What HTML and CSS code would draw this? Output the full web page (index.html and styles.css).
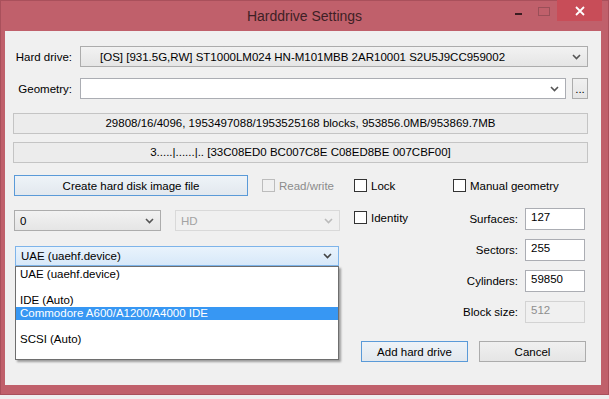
FILE: index.html
```html
<!DOCTYPE html>
<html lang="en">
<head>
    <meta charset="UTF-8">
    <title>Harddrive Settings</title>
    <link rel="stylesheet" href="styles.css">
</head>
<body>
    <div class="window">
        <div class="titlebar">
            <div></div>
            <div class="title">Harddrive Settings</div>
            <div class="controls">
                <span class="ctl ctl-min"><i></i></span>
                <span class="ctl ctl-max"><i></i></span>
                <span class="ctl ctl-close">
                    <svg width="10" height="10" viewBox="0 0 10 10"><path d="M1 1L9 9M9 1L1 9" stroke="#fff" stroke-width="1.8"/></svg>
                </span>
            </div>
        </div>

        <div class="client">
            <!-- drive row -->
            <div class="row">
                <label class="lbl">Hard drive:</label>
                <div class="combo combo-drive">
                    <span class="combo-text">[OS] [931.5G,RW] ST1000LM024 HN-M101MBB 2AR10001 S2U5J9CC959002</span>
                    <svg class="chev" width="9" height="6" viewBox="0 0 9 6"><path d="M1 1L4.5 4.5L8 1" fill="none" stroke="#555" stroke-width="1.6"/></svg>
                </div>
            </div>

            <div class="row row-geo">
                <label class="lbl">Geometry:</label>
                <div class="combo combo-edit">
                    <span class="combo-text"></span>
                    <svg class="chev" width="9" height="6" viewBox="0 0 9 6"><path d="M1 1L4.5 4.5L8 1" fill="none" stroke="#555" stroke-width="1.6"/></svg>
                </div>
                <button class="btn btn-dots">...</button>
            </div>

            <div class="infobox info-1">29808/16/4096, 1953497088/1953525168 blocks, 953856.0MB/953869.7MB</div>
            <div class="infobox info-2">3.....|......|.. [33C08ED0 BC007C8E C08ED8BE 007CBF00]</div>

            <div class="lower">
                <div class="left-col">
                    <div class="lrow">
                        <button class="btn btn-default btn-create">Create hard disk image file</button>
                        <span class="check disabled"><span class="box"></span>Read/write</span>
                    </div>
                    <div class="lrow lrow-sel">
                        <div class="combo combo-unit">
                            <span class="combo-text">0</span>
                            <svg class="chev" width="9" height="6" viewBox="0 0 9 6"><path d="M1 1L4.5 4.5L8 1" fill="none" stroke="#555" stroke-width="1.6"/></svg>
                        </div>
                        <div class="combo combo-hd disabled">
                            <span class="combo-text">HD</span>
                            <svg class="chev" width="9" height="6" viewBox="0 0 9 6"><path d="M1 1L4.5 4.5L8 1" fill="none" stroke="#bbb" stroke-width="1.6"/></svg>
                        </div>
                    </div>
                    <div class="lrow lrow-ctrl">
                        <div class="combo combo-open">
                            <span class="combo-text">UAE (uaehf.device)</span>
                            <svg class="chev" width="9" height="6" viewBox="0 0 9 6"><path d="M1 1L4.5 4.5L8 1" fill="none" stroke="#444" stroke-width="1.6"/></svg>
                            <ul class="droplist">
                                <li>UAE (uaehf.device)</li>
                                <li></li>
                                <li>IDE (Auto)</li>
                                <li class="sel">Commodore A600/A1200/A4000 IDE</li>
                                <li></li>
                                <li>SCSI (Auto)</li>
                                <li></li>
                            </ul>
                        </div>
                    </div>
                </div>

                <div class="right-col">
                    <div class="rrow">
                        <span class="check check-lock"><span class="box"></span>Lock</span>
                        <span class="check"><span class="box"></span>Manual geometry</span>
                    </div>
                    <div class="rgeo">
                        <div class="rgeo-left">
                            <span class="check"><span class="box"></span>Identity</span>
                        </div>
                        <div class="fields">
                            <label class="flbl">Surfaces:</label><div class="field">127</div>
                            <label class="flbl">Sectors:</label><div class="field">255</div>
                            <label class="flbl">Cylinders:</label><div class="field">59850</div>
                            <label class="flbl">Block size:</label><div class="field disabled">512</div>
                        </div>
                    </div>
                    <div class="buttons">
                        <button class="btn btn-default">Add hard drive</button>
                        <button class="btn">Cancel</button>
                    </div>
                </div>
            </div>
        </div>
    </div>
</body>
</html>
```

FILE: styles.css
```css
body {
    margin: 0;
    background-color: #efefef;
    font-family: 'Liberation Sans', Arial, sans-serif;
    font-size: 11.5px;
    color: #000;
}

.window {
    width: 609px;
    height: 395px;
    display: flex;
    flex-direction: column;
    background-color: #c0606b;
    box-shadow: inset 0 0 0 1px #a9505b;
}

/* title bar */
.titlebar {
    height: 31px;
    display: grid;
    grid-template-columns: 1fr auto 1fr;
}

.title {
    font-size: 14px;
    color: #3e1f25;
    line-height: 33px;
}

.controls {
    justify-self: end;
    display: flex;
    align-items: flex-start;
    margin-right: 7px;
}

.ctl {
    height: 21px;
    display: flex;
    align-items: center;
    justify-content: center;
}

.ctl-min {
    width: 26px;
}

.ctl-min i {
    width: 7px;
    height: 2px;
    margin-top: 6px;
    background-color: #3a1c21;
}

.ctl-max {
    width: 26px;
}

.ctl-max i {
    width: 10px;
    height: 7px;
    margin-top: 2px;
    border: 1px solid #9a4f58;
}

.ctl-close {
    width: 45px;
    background-color: #c84d58;
}

/* client area */
.client {
    flex: 1;
    margin: 0 8px 10px 5px;
    padding: 15px 13px 0 8px;
    background-color: #f0f0f0;
}

.row {
    display: flex;
    align-items: center;
    height: 21px;
}

.row-geo {
    margin-top: 11px;
}

.lbl {
    width: 59px;
    margin-right: 8px;
    text-align: right;
}

.combo {
    position: relative;
    box-sizing: border-box;
    height: 21px;
    display: flex;
    align-items: center;
    padding-left: 5px;
    border: 1px solid #acacac;
    background: linear-gradient(#f2f2f2, #e5e5e5);
}

.combo-text {
    flex: 1;
    white-space: nowrap;
}

.chev {
    margin-right: 6px;
}

.combo-drive {
    width: 508px;
    padding-left: 19px;
}

.combo-edit {
    width: 486px;
    background: #fff;
    border-color: #abadb3;
}

.btn {
    box-sizing: border-box;
    height: 21px;
    padding: 0;
    border: 1px solid #acacac;
    background: linear-gradient(#f0f0f0, #e5e5e5);
    font-family: inherit;
    font-size: 11.5px;
    color: #000;
}

.btn-default {
    border-color: #5a9ad8;
    background: linear-gradient(#eef3f8, #e2e8ee);
}

.btn-dots {
    width: 16px;
    margin-left: 6px;
    line-height: 14px;
}

.infobox {
    box-sizing: border-box;
    height: 21px;
    line-height: 19px;
    text-align: center;
    border: 1px solid #c4c4c4;
    background-color: #ececec;
}

.info-1 {
    margin-top: 14px;
}

.info-2 {
    margin-top: 8px;
}

/* lower part */
.lower {
    display: flex;
    margin-top: 12px;
    margin-left: 1px;
}

.left-col {
    width: 326px;
}

.lrow {
    display: flex;
    align-items: center;
    height: 21px;
}

.btn-create {
    width: 234px;
    margin-right: 14px;
}

.lrow-sel {
    margin-top: 14px;
}

.combo-unit {
    width: 147px;
    margin-right: 14px;
}

.combo-hd {
    width: 165px;
}

.combo.disabled {
    background: #f0f0f0;
    border-color: #d9d9d9;
    color: #a3a3a3;
}

.lrow-ctrl {
    margin-top: 15px;
    height: 20px;
}

.combo-open {
    width: 324px;
    height: 20px;
    margin-left: 1px;
    border-color: #7eb4ea;
    background: linear-gradient(#e9f3fc, #d7e8f9);
}

.droplist {
    position: absolute;
    top: 19px;
    left: -1px;
    width: 324px;
    box-sizing: border-box;
    margin: 0;
    padding: 1px 0 0;
    list-style: none;
    background-color: #fff;
    border: 1px solid #6e6e6e;
    box-shadow: 2px 2px 2px rgba(0, 0, 0, 0.35);
    z-index: 2;
}

.droplist li {
    height: 13px;
    line-height: 13px;
    padding-left: 4px;
    white-space: nowrap;
}

.droplist li.sel {
    background-color: #3797f3;
    color: #fff;
}

/* checkboxes */
.check {
    display: flex;
    align-items: center;
}

.check .box {
    width: 11px;
    height: 11px;
    margin-right: 4px;
    border: 1px solid #333;
    background-color: #fff;
}

.check.disabled {
    color: #8c8c8c;
}

.check.disabled .box {
    border-color: #bcbcbc;
    background-color: #f0f0f0;
}

.right-col {
    width: 233px;
    margin-left: 14px;
}

.rrow {
    display: flex;
    align-items: center;
    height: 21px;
}

.check-lock {
    width: 99px;
}

.rgeo {
    display: flex;
    margin-top: 12px;
}

.rgeo-left {
    width: 99px;
    padding-top: 3px;
}

.fields {
    display: grid;
    grid-template-columns: 65px 60px;
    grid-auto-rows: 22px;
    column-gap: 7px;
    row-gap: 9px;
    align-items: center;
}

.flbl {
    text-align: right;
}

.field {
    box-sizing: border-box;
    height: 22px;
    padding: 2px 0 0 5px;
    border: 1px solid #abadb3;
    background-color: #fff;
}

.field.disabled {
    border-color: #d3d3d3;
    background-color: #f0f0f0;
    color: #8e8e8e;
}

.buttons {
    display: flex;
    gap: 11px;
    margin-top: 18px;
    padding-left: 7px;
}

.buttons .btn {
    width: 107px;
}
```
